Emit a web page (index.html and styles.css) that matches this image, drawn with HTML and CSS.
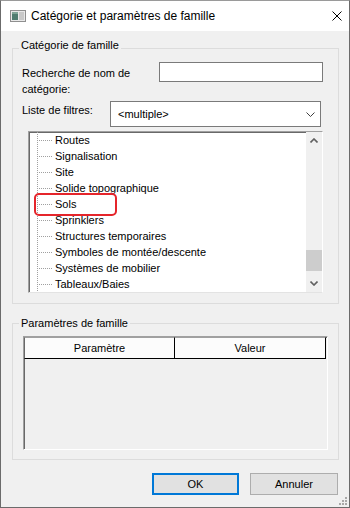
FILE: index.html
```html
<!DOCTYPE html>
<html lang="fr">
<head>
  <meta charset="UTF-8">
  <meta name="viewport" content="width=device-width, initial-scale=1">
  <title>Catégorie et paramètres de famille</title>
  <link rel="stylesheet" href="styles.css">
</head>
<body>
  <div class="window">
    <div class="titlebar">
      <svg class="app-icon" width="16" height="12" viewBox="0 0 16 12">
        <rect x="0.5" y="0.5" width="15" height="11" fill="#e9e9e9" stroke="#8f8f8f"/>
        <rect x="2" y="2" width="6" height="8" fill="#4f7d70"/>
        <rect x="2" y="2" width="6" height="2" fill="#7fa597"/>
        <rect x="9" y="2" width="5" height="8" fill="#c9c9c9"/>
      </svg>
      <span class="title">Catégorie et paramètres de famille</span>
      <svg class="close" width="10" height="10" viewBox="0 0 10 10">
        <path d="M0.5 0.5 L9.5 9.5 M9.5 0.5 L0.5 9.5" stroke="#000" stroke-width="1" fill="none"/>
      </svg>
    </div>

    <div class="client">
      <fieldset class="group group-category">
        <legend>Catégorie de famille</legend>
        <div class="row row-search">
          <label class="field-label">Recherche de nom de<br>catégorie:</label>
          <input class="textbox" type="text">
        </div>
        <div class="row row-filter">
          <label class="field-label">Liste de filtres:</label>
          <div class="combo">
            <span>&lt;multiple&gt;</span>
            <svg width="9" height="5" viewBox="0 0 9 5">
              <path d="M0.5 0.5 L4.5 4.5 L8.5 0.5" stroke="#404040" fill="none"/>
            </svg>
          </div>
        </div>
        <div class="tree">
          <ul class="tree-items">
            <li>Routes</li>
            <li>Signalisation</li>
            <li>Site</li>
            <li>Solide topographique</li>
            <li>Sols</li>
            <li>Sprinklers</li>
            <li>Structures temporaires</li>
            <li>Symboles de montée/descente</li>
            <li>Systèmes de mobilier</li>
            <li>Tableaux/Baies</li>
          </ul>
          <div class="scrollbar">
            <div class="sb-btn">
              <svg width="8" height="5" viewBox="0 0 8 5"><path d="M0.5 4.5 L4 1 L7.5 4.5" stroke="#606060" stroke-width="1.6" fill="none"/></svg>
            </div>
            <div class="sb-track"><div class="sb-thumb"></div></div>
            <div class="sb-btn">
              <svg width="8" height="5" viewBox="0 0 8 5"><path d="M0.5 0.5 L4 4 L7.5 0.5" stroke="#606060" stroke-width="1.6" fill="none"/></svg>
            </div>
          </div>
          <div class="highlight"></div>
        </div>
      </fieldset>

      <fieldset class="group group-params">
        <legend>Paramètres de famille</legend>
        <div class="param-grid">
          <div class="grid-head">
            <div class="grid-col">Paramètre</div>
            <div class="grid-col">Valeur</div>
          </div>
        </div>
      </fieldset>

      <div class="buttons">
        <button class="btn btn-default">OK</button>
        <button class="btn btn-cancel">Annuler</button>
      </div>
    </div>

    <svg class="grip" width="9" height="9" viewBox="0 0 9 9">
      <rect x="7" y="1" width="2" height="2" fill="#a8a8a8"/>
      <rect x="4" y="4" width="2" height="2" fill="#a8a8a8"/>
      <rect x="7" y="4" width="2" height="2" fill="#a8a8a8"/>
      <rect x="1" y="7" width="2" height="2" fill="#a8a8a8"/>
      <rect x="4" y="7" width="2" height="2" fill="#a8a8a8"/>
      <rect x="7" y="7" width="2" height="2" fill="#a8a8a8"/>
    </svg>
  </div>
</body>
</html>
```

FILE: styles.css
```css
body { margin: 0; font: 11px/16px "Liberation Sans", Arial, sans-serif; color: #000; }

.window { position: relative; width: 350px; height: 508px; box-sizing: border-box; border: 1px solid #6b6b6b; border-top-color: #9a9a9a; background: #f0f0f0; display: flex; flex-direction: column; }

.titlebar { flex: none; height: 30px; background: #fff; display: flex; align-items: center; }
.app-icon { margin-left: 9px; }
.title { margin-left: 5px; font-size: 12px; }
.close { margin-left: auto; margin-right: 7px; }

.client { flex: 1; padding: 7px 10px 0 11px; }

.group { margin: 0; min-width: 0; border: 1px solid #dcdcdc; padding: 4px 15px 10px 9px; }
.group legend { margin-left: -3px; padding: 0 2px 6px; line-height: 14px; }
.group-params { margin-top: 12px; padding: 6px 10px 9px 9px; }
.group-params legend { padding-bottom: 0; }

.row { display: flex; align-items: flex-start; }
.row-search .field-label { width: 137px; margin-top: 3px; }
.row-filter { margin-top: 4px; }
.row-filter .field-label { width: 88px; margin-top: 1px; }

.textbox { width: 164px; height: 20px; box-sizing: border-box; margin: 0; border: 1px solid #7a7a7a; background: #fff; padding: 0 2px; font: inherit; }

.combo { width: 211px; height: 26px; box-sizing: border-box; border: 1px solid #7a7a7a; background: #fff; display: flex; align-items: center; padding: 0 5px 0 7px; }
.combo span { flex: 1; }

.tree { position: relative; margin: 4px 0 0 6px; width: 295px; height: 162px; box-sizing: border-box; border: 1px solid; border-color: #a0a0a0 #fff #e3e3e3 #a0a0a0; box-shadow: inset 1px 1px 0 #696969; background: #fff; display: flex; overflow: hidden; }
.tree-items { flex: 1; margin: 0; padding: 0; list-style: none; }
.tree-items li {
  height: 16px; line-height: 16px; padding-left: 26px; white-space: nowrap;
  background-image: repeating-linear-gradient(to bottom, #a0a0a0 0 1px, transparent 1px 2px), repeating-linear-gradient(to right, #a0a0a0 0 1px, transparent 1px 2px);
  background-size: 1px 100%, 15px 1px;
  background-position: 8px 0, 8px 8px;
  background-repeat: no-repeat;
}

.scrollbar { flex: none; width: 16px; background: #f0f0f0; display: flex; flex-direction: column; }
.sb-btn { height: 17px; display: flex; align-items: center; justify-content: center; }
.sb-track { flex: 1; }
.sb-thumb { margin-top: 101px; height: 21px; background: #cdcdcd; }

.highlight { position: absolute; left: 5px; top: 61px; width: 83px; height: 23px; box-sizing: border-box; border: 2px solid #e5252b; border-radius: 5px; }

.param-grid { margin-left: 1px; width: 305px; height: 114px; box-sizing: border-box; border: 1px solid; border-color: #a0a0a0 #fff #fff #a0a0a0; box-shadow: inset 1px 1px 0 #696969; }
.grid-head { display: flex; }
.grid-col { width: 151px; height: 22px; box-sizing: border-box; border-top: 1px solid #a0a0a0; border-right: 1px solid #000; border-bottom: 1px solid #000; background: #fcfcfc; text-align: center; line-height: 20px; }
.grid-col:first-child { border-left: 1px solid #696969; }

.buttons { margin-top: 13px; display: flex; justify-content: flex-end; gap: 11px; padding-right: 1px; }
.btn { height: 22px; margin: 0; padding: 0; background: #e1e1e1; border: 1px solid #adadad; font: inherit; color: #000; }
.btn-default { width: 87px; border: 2px solid #0078d7; }
.btn-cancel { width: 88px; }

.grip { position: absolute; right: 2px; bottom: 2px; }
```
